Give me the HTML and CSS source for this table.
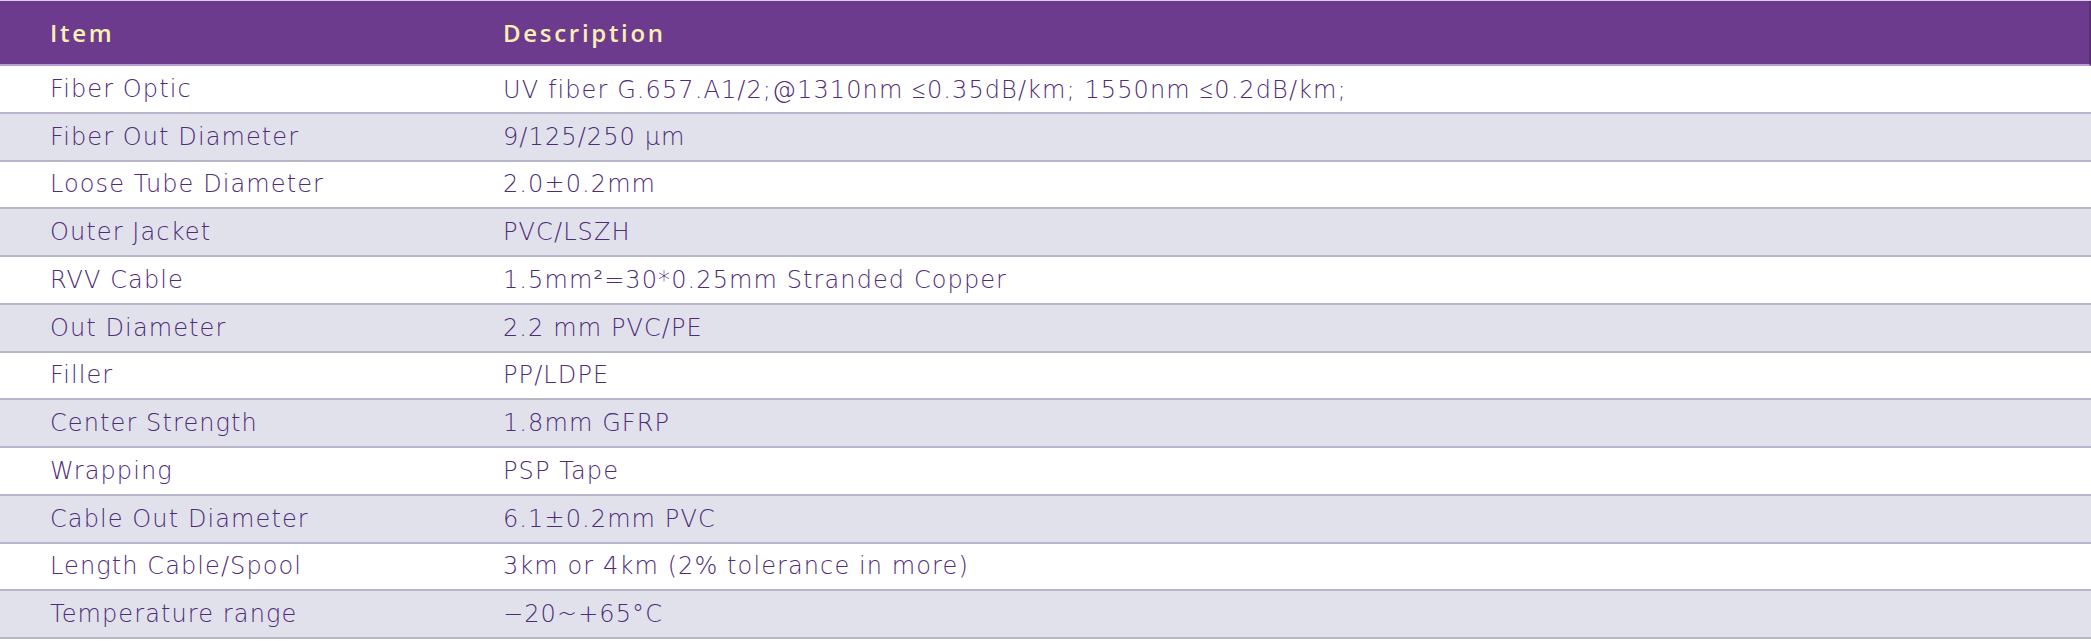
FILE: index.html
```html
<!DOCTYPE html>
<html>
<head>
<meta charset="utf-8">
<link rel="stylesheet" href="styles.css">
</head>
<body>
<div class="spec">
  <div class="row head"><div class="c1">Item</div><div class="c2">Description</div></div>
  <div class="row"><div class="c1">Fiber Optic</div><div class="c2">UV fiber G.657.A1/2;@1310nm ≤0.35dB/km; 1550nm ≤0.2dB/km;</div></div>
  <div class="row alt"><div class="c1">Fiber Out Diameter</div><div class="c2">9/125/250 μm</div></div>
  <div class="row"><div class="c1">Loose Tube Diameter</div><div class="c2">2.0±0.2mm</div></div>
  <div class="row alt"><div class="c1">Outer Jacket</div><div class="c2">PVC/LSZH</div></div>
  <div class="row"><div class="c1">RVV Cable</div><div class="c2">1.5mm²=30*0.25mm Stranded Copper</div></div>
  <div class="row alt"><div class="c1">Out Diameter</div><div class="c2">2.2 mm PVC/PE</div></div>
  <div class="row"><div class="c1">Filler</div><div class="c2">PP/LDPE</div></div>
  <div class="row alt"><div class="c1">Center Strength</div><div class="c2">1.8mm GFRP</div></div>
  <div class="row"><div class="c1">Wrapping</div><div class="c2">PSP Tape</div></div>
  <div class="row alt"><div class="c1">Cable Out Diameter</div><div class="c2">6.1±0.2mm PVC</div></div>
  <div class="row"><div class="c1">Length Cable/Spool</div><div class="c2">3km or 4km (2% tolerance in more)</div></div>
  <div class="row alt"><div class="c1">Temperature range</div><div class="c2">−20~+65°C</div></div>
</div>
</body>
</html>
```
FILE: styles.css
```css
html, body {
  margin: 0;
  padding: 0;
  background: #ffffff;
}
.spec {
  width: 2091px;
  font-family: "DejaVu Sans", "Open Sans", sans-serif;
  font-weight: 200;
  font-size: 24px;
  letter-spacing: 1.1px;
  color: #4e2c78;
  border-top: 1px solid #d9d2e6;
}
.row {
  display: grid;
  grid-template-columns: 453px 1fr;
  align-items: center;
  height: 47.75px;
  box-sizing: border-box;
  border-bottom: 2px solid #b9b6cc;
}
.row.alt {
  background: #e1e1ec;
}
.row.head {
  height: 65px;
  background: #6d3b8e;
  color: #fcefb4;
  font-family: "Open Sans", sans-serif;
  font-weight: 600;
  font-size: 24px;
  letter-spacing: 2.7px;
  border-bottom: 2px solid #b79fd2;
  border-right: 2px solid #5a2f78;
}
.c1 {
  padding-left: 50px;
}
.c2 {
  padding-left: 50px;
}
```
